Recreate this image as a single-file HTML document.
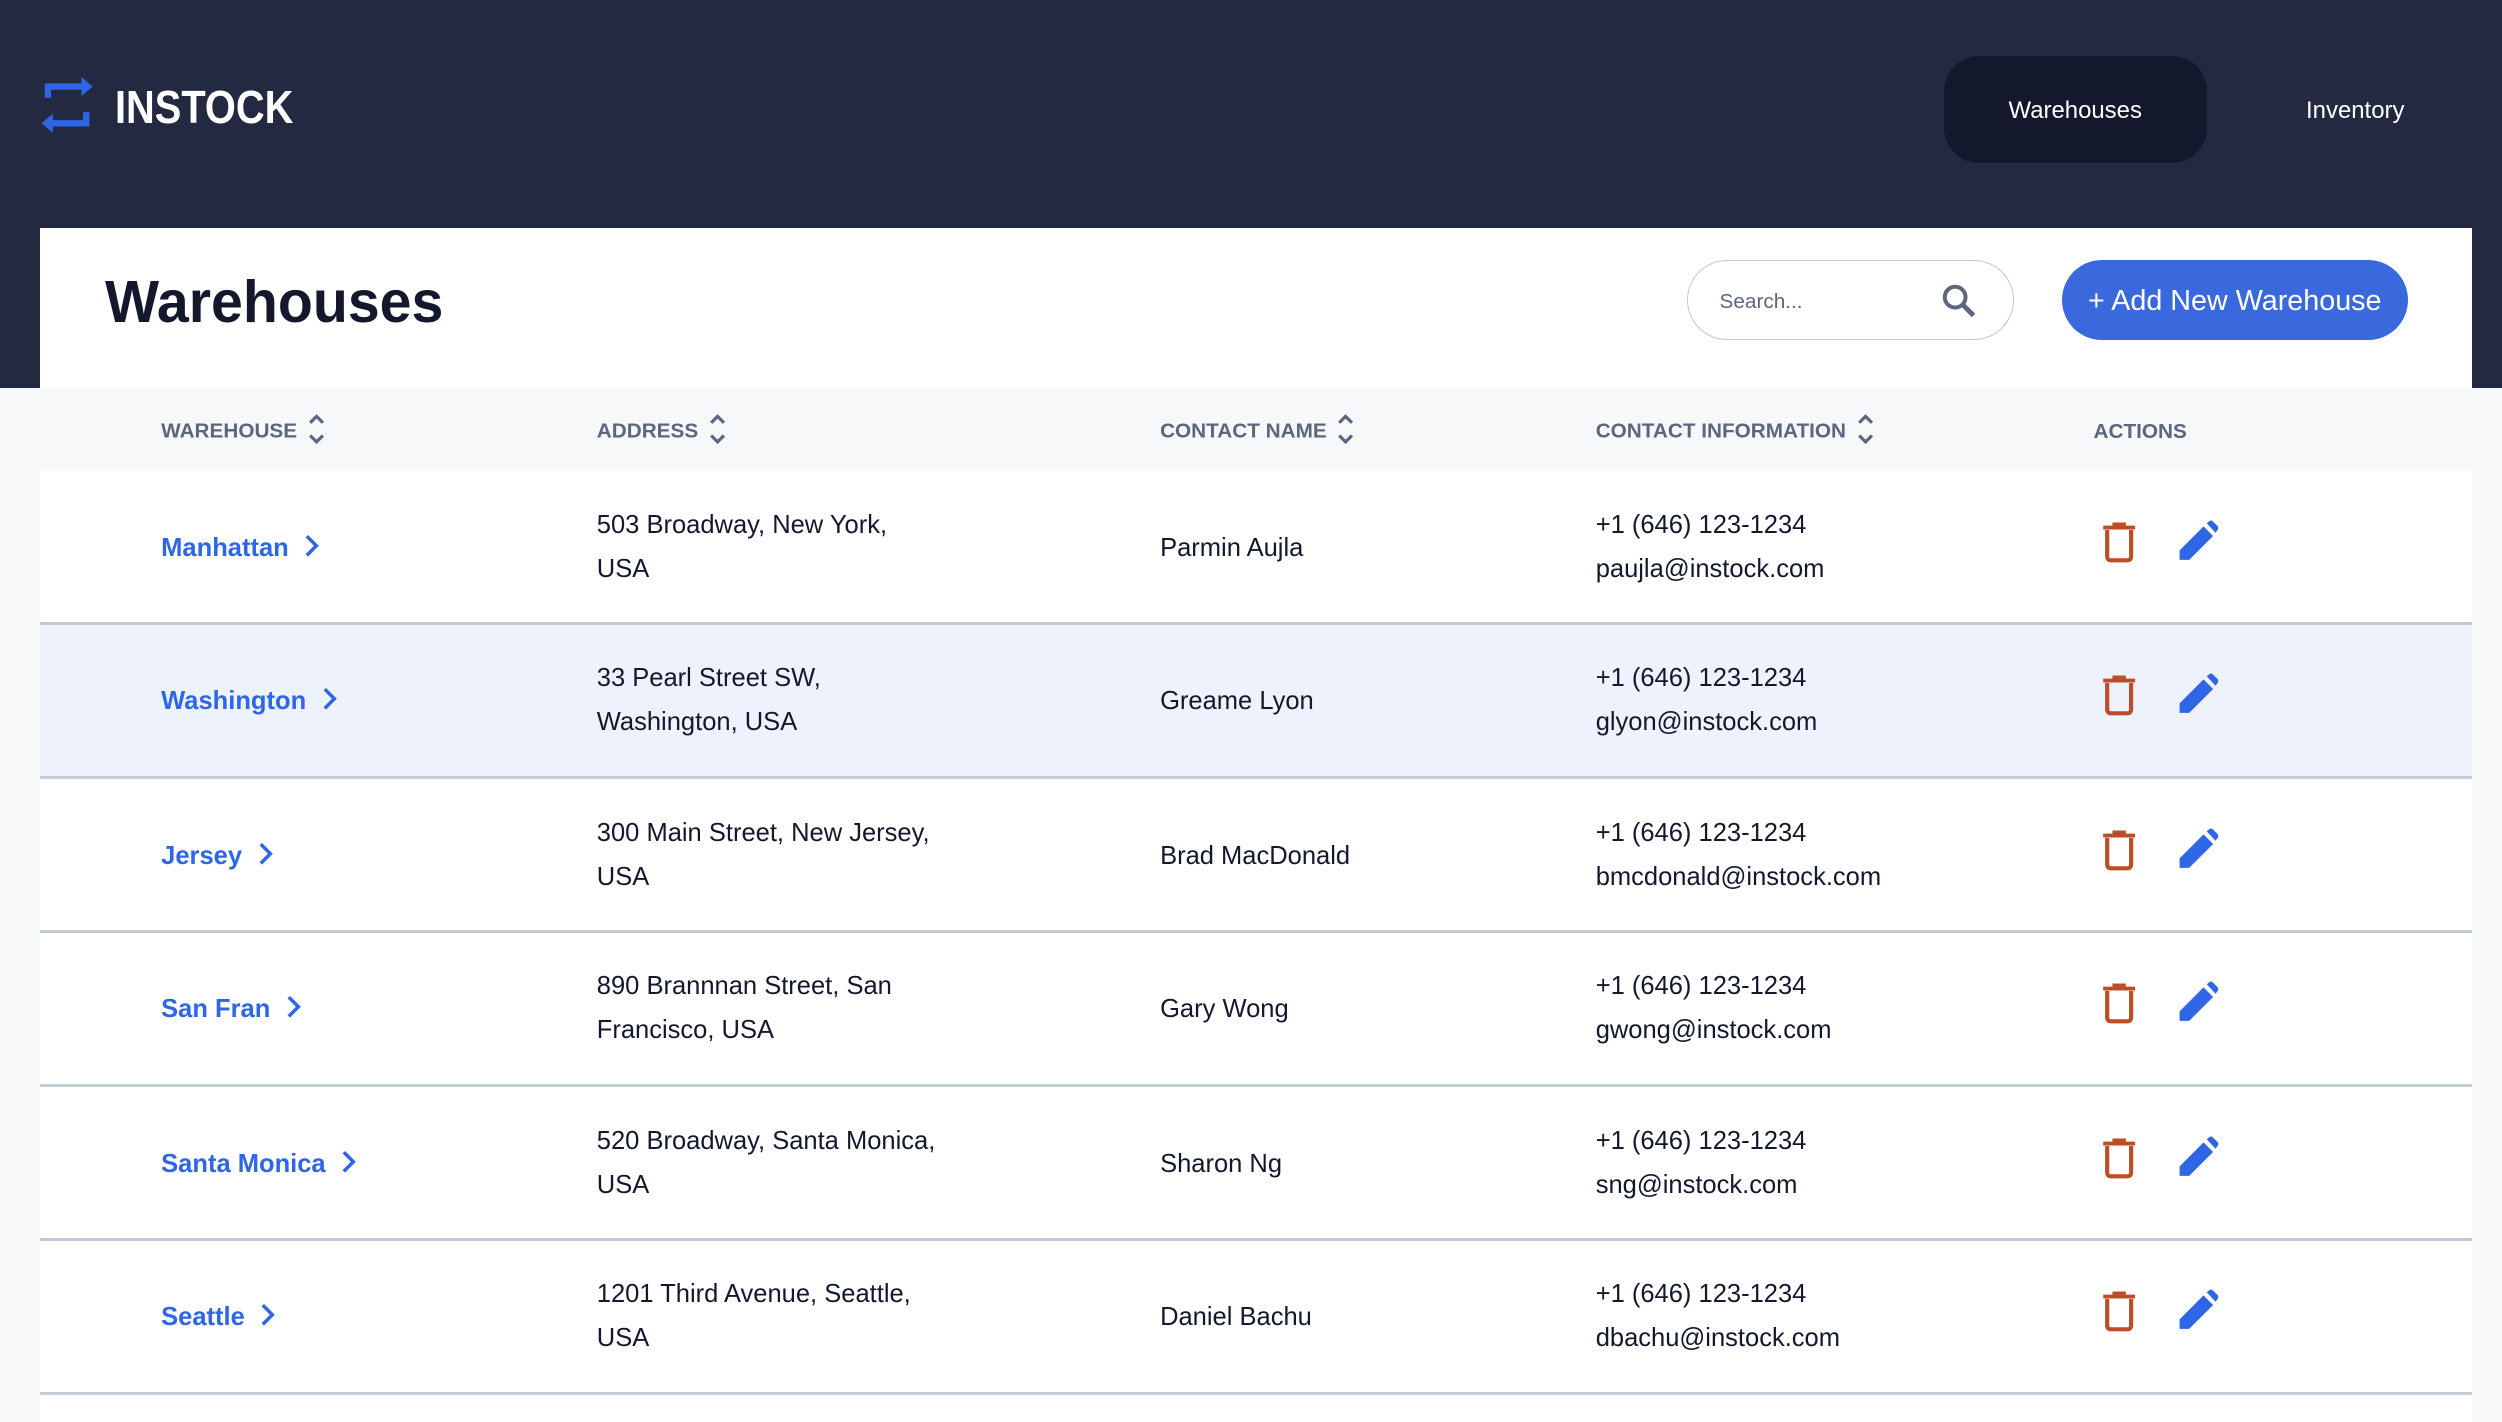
<!DOCTYPE html>
<html><head><meta charset="utf-8"><style>
*{margin:0;padding:0;box-sizing:border-box}
html,body{width:2502px;height:1422px;overflow:hidden;background:#f7f8f9}
#r{zoom:1.5957;width:1568px;height:891px;overflow:hidden;position:relative;font-family:"Liberation Sans",sans-serif;color:#13182c}
.hdr{position:absolute;left:0;top:0;width:1568px;height:243px;background:#232940}
.abs{position:absolute}
.logo{left:72px;top:50px;font-size:29px;font-weight:bold;color:#fff;transform:scaleX(0.86);transform-origin:left}
.pill{left:1218px;top:35px;width:165px;height:67px;background:#13182c;border-radius:22px;color:#fff;font-size:15px;text-align:center;line-height:69px}
.inv{left:1410px;top:35px;width:132px;height:67px;color:#fff;font-size:15px;text-align:center;line-height:69px}
.card{left:25px;top:143px;width:1524px;height:748px;background:#fff}
.title{left:66px;top:168px;font-size:37px;font-weight:bold;color:#13182c;transform:scaleX(0.97);transform-origin:left}
.search{left:1057px;top:163px;width:205px;height:50px;border:1px solid #c1c7d3;border-radius:25px;background:#fff}
.search span{position:absolute;left:20px;top:18px;font-size:13px;color:#5c667e}
.btn{left:1292px;top:163px;width:217px;height:50px;border-radius:25px;background:#3a69dd;color:#fff;font-size:18px;text-align:center;line-height:52px}
.th{left:25px;top:243px;width:1524px;height:52px;background:#f7f8f9}
.hl{position:absolute;top:261px;font-size:13px;font-weight:bold;color:#5c667e;white-space:nowrap}
.hl svg{vertical-align:middle;margin-left:6px;margin-top:-4px}
.row{position:absolute;left:25px;width:1524px;height:96.5px;border-bottom:2px solid #c5cbd6;background:#fff}
.row.h{background:#eef2fc}
.c{position:absolute;font-size:16px;line-height:27.5px;color:#13182c;white-space:nowrap}
.lk{color:#2e66e6;font-weight:bold}
</style></head><body><div id="r">
<div class="hdr"></div>
<svg class="abs" style="left:25px;top:48px" width="34" height="36" viewBox="0 0 34 36"><path d="M5 13V6H27" fill="none" stroke="#2e66e6" stroke-width="4"/><path d="M26 0L33 6L26 12Z" fill="#2e66e6"/><path d="M29 22V29H7" fill="none" stroke="#2e66e6" stroke-width="4"/><path d="M8 23L1 29L8 35Z" fill="#2e66e6"/></svg>
<div class="abs logo">INSTOCK</div>
<div class="abs pill">Warehouses</div>
<div class="abs inv">Inventory</div>
<div class="abs card"></div>
<div class="abs title">Warehouses</div>
<div class="abs search"><span>Search...</span><svg style="position:absolute;left:158px;top:13px" width="24" height="24" viewBox="0 0 24 24"><circle cx="9.5" cy="9.5" r="6.5" fill="none" stroke="#5c667e" stroke-width="2.5"/><path d="M14 14L21 21" stroke="#5c667e" stroke-width="3"/></svg></div>
<div class="abs btn">+ Add New Warehouse</div>
<div class="abs th"></div>
<div class="hl" style="left:101px">WAREHOUSE<svg width="12" height="24" viewBox="0 0 12 24"><path d="M2 8L6 4L10 8M2 16L6 20L10 16" fill="none" stroke="#5c667e" stroke-width="2"/></svg></div>
<div class="hl" style="left:374px">ADDRESS<svg width="12" height="24" viewBox="0 0 12 24"><path d="M2 8L6 4L10 8M2 16L6 20L10 16" fill="none" stroke="#5c667e" stroke-width="2"/></svg></div>
<div class="hl" style="left:727px">CONTACT NAME<svg width="12" height="24" viewBox="0 0 12 24"><path d="M2 8L6 4L10 8M2 16L6 20L10 16" fill="none" stroke="#5c667e" stroke-width="2"/></svg></div>
<div class="hl" style="left:1000px">CONTACT INFORMATION<svg width="12" height="24" viewBox="0 0 12 24"><path d="M2 8L6 4L10 8M2 16L6 20L10 16" fill="none" stroke="#5c667e" stroke-width="2"/></svg></div>
<div class="hl" style="left:1312px;top:263px">ACTIONS</div>

<div class="row" style="top:295px"></div>
<div class="row h" style="top:391.5px"></div>
<div class="row" style="top:488px"></div>
<div class="row" style="top:584.5px"></div>
<div class="row" style="top:681px"></div>
<div class="row" style="top:777.5px"></div>
<div class="row" style="top:874px"></div>

<div class="c lk" style="left:101px;top:330px">Manhattan <svg width="12" height="16" viewBox="0 0 12 16" style="margin-left:4px;vertical-align:-2px"><path d="M3 2L9 8L3 14" fill="none" stroke="#2e66e6" stroke-width="2.2"/></svg></div>
<div class="c" style="left:374px;top:316px">503 Broadway, New York,<br>USA</div>
<div class="c" style="left:727px;top:330px">Parmin Aujla</div>
<div class="c" style="left:1000px;top:316px">+1 (646) 123-1234<br>paujla@instock.com</div>

<div class="c lk" style="left:101px;top:426px">Washington <svg width="12" height="16" viewBox="0 0 12 16" style="margin-left:4px;vertical-align:-2px"><path d="M3 2L9 8L3 14" fill="none" stroke="#2e66e6" stroke-width="2.2"/></svg></div>
<div class="c" style="left:374px;top:412px">33 Pearl Street SW,<br>Washington, USA</div>
<div class="c" style="left:727px;top:426px">Greame Lyon</div>
<div class="c" style="left:1000px;top:412px">+1 (646) 123-1234<br>glyon@instock.com</div>

<div class="c lk" style="left:101px;top:523px">Jersey <svg width="12" height="16" viewBox="0 0 12 16" style="margin-left:4px;vertical-align:-2px"><path d="M3 2L9 8L3 14" fill="none" stroke="#2e66e6" stroke-width="2.2"/></svg></div>
<div class="c" style="left:374px;top:509px">300 Main Street, New Jersey,<br>USA</div>
<div class="c" style="left:727px;top:523px">Brad MacDonald</div>
<div class="c" style="left:1000px;top:509px">+1 (646) 123-1234<br>bmcdonald@instock.com</div>

<div class="c lk" style="left:101px;top:619px">San Fran <svg width="12" height="16" viewBox="0 0 12 16" style="margin-left:4px;vertical-align:-2px"><path d="M3 2L9 8L3 14" fill="none" stroke="#2e66e6" stroke-width="2.2"/></svg></div>
<div class="c" style="left:374px;top:605px">890 Brannnan Street, San<br>Francisco, USA</div>
<div class="c" style="left:727px;top:619px">Gary Wong</div>
<div class="c" style="left:1000px;top:605px">+1 (646) 123-1234<br>gwong@instock.com</div>

<div class="c lk" style="left:101px;top:716px">Santa Monica <svg width="12" height="16" viewBox="0 0 12 16" style="margin-left:4px;vertical-align:-2px"><path d="M3 2L9 8L3 14" fill="none" stroke="#2e66e6" stroke-width="2.2"/></svg></div>
<div class="c" style="left:374px;top:702px">520 Broadway, Santa Monica,<br>USA</div>
<div class="c" style="left:727px;top:716px">Sharon Ng</div>
<div class="c" style="left:1000px;top:702px">+1 (646) 123-1234<br>sng@instock.com</div>

<div class="c lk" style="left:101px;top:812px">Seattle <svg width="12" height="16" viewBox="0 0 12 16" style="margin-left:4px;vertical-align:-2px"><path d="M3 2L9 8L3 14" fill="none" stroke="#2e66e6" stroke-width="2.2"/></svg></div>
<div class="c" style="left:374px;top:798px">1201 Third Avenue, Seattle,<br>USA</div>
<div class="c" style="left:727px;top:812px">Daniel Bachu</div>
<div class="c" style="left:1000px;top:798px">+1 (646) 123-1234<br>dbachu@instock.com</div>

<svg class="abs" style="left:1316px;top:327px" width="24" height="26" viewBox="0 0 24 26"><path d="M2 3.5H22M9 3.5V1.5H15V3.5" fill="none" stroke="#bd4d26" stroke-width="2.4"/><path d="M4.5 5V21.5Q4.5 24 7 24H17Q19.5 24 19.5 21.5V5" fill="none" stroke="#bd4d26" stroke-width="2.6"/></svg>
<svg class="abs" style="left:1365px;top:326px" width="26" height="26" viewBox="0 0 26 26"><path d="M1 25V19L16 4L22 10L7 25Z" fill="#2e66e6"/><path d="M18 2L20 0.5Q21 0 22 1L25 4Q25.5 5 25 6L23.5 8Z" fill="#2e66e6"/></svg>

<svg class="abs" style="left:1316px;top:423px" width="24" height="26" viewBox="0 0 24 26"><path d="M2 3.5H22M9 3.5V1.5H15V3.5" fill="none" stroke="#bd4d26" stroke-width="2.4"/><path d="M4.5 5V21.5Q4.5 24 7 24H17Q19.5 24 19.5 21.5V5" fill="none" stroke="#bd4d26" stroke-width="2.6"/></svg>
<svg class="abs" style="left:1365px;top:422px" width="26" height="26" viewBox="0 0 26 26"><path d="M1 25V19L16 4L22 10L7 25Z" fill="#2e66e6"/><path d="M18 2L20 0.5Q21 0 22 1L25 4Q25.5 5 25 6L23.5 8Z" fill="#2e66e6"/></svg>

<svg class="abs" style="left:1316px;top:520px" width="24" height="26" viewBox="0 0 24 26"><path d="M2 3.5H22M9 3.5V1.5H15V3.5" fill="none" stroke="#bd4d26" stroke-width="2.4"/><path d="M4.5 5V21.5Q4.5 24 7 24H17Q19.5 24 19.5 21.5V5" fill="none" stroke="#bd4d26" stroke-width="2.6"/></svg>
<svg class="abs" style="left:1365px;top:519px" width="26" height="26" viewBox="0 0 26 26"><path d="M1 25V19L16 4L22 10L7 25Z" fill="#2e66e6"/><path d="M18 2L20 0.5Q21 0 22 1L25 4Q25.5 5 25 6L23.5 8Z" fill="#2e66e6"/></svg>

<svg class="abs" style="left:1316px;top:616px" width="24" height="26" viewBox="0 0 24 26"><path d="M2 3.5H22M9 3.5V1.5H15V3.5" fill="none" stroke="#bd4d26" stroke-width="2.4"/><path d="M4.5 5V21.5Q4.5 24 7 24H17Q19.5 24 19.5 21.5V5" fill="none" stroke="#bd4d26" stroke-width="2.6"/></svg>
<svg class="abs" style="left:1365px;top:615px" width="26" height="26" viewBox="0 0 26 26"><path d="M1 25V19L16 4L22 10L7 25Z" fill="#2e66e6"/><path d="M18 2L20 0.5Q21 0 22 1L25 4Q25.5 5 25 6L23.5 8Z" fill="#2e66e6"/></svg>

<svg class="abs" style="left:1316px;top:713px" width="24" height="26" viewBox="0 0 24 26"><path d="M2 3.5H22M9 3.5V1.5H15V3.5" fill="none" stroke="#bd4d26" stroke-width="2.4"/><path d="M4.5 5V21.5Q4.5 24 7 24H17Q19.5 24 19.5 21.5V5" fill="none" stroke="#bd4d26" stroke-width="2.6"/></svg>
<svg class="abs" style="left:1365px;top:712px" width="26" height="26" viewBox="0 0 26 26"><path d="M1 25V19L16 4L22 10L7 25Z" fill="#2e66e6"/><path d="M18 2L20 0.5Q21 0 22 1L25 4Q25.5 5 25 6L23.5 8Z" fill="#2e66e6"/></svg>

<svg class="abs" style="left:1316px;top:809px" width="24" height="26" viewBox="0 0 24 26"><path d="M2 3.5H22M9 3.5V1.5H15V3.5" fill="none" stroke="#bd4d26" stroke-width="2.4"/><path d="M4.5 5V21.5Q4.5 24 7 24H17Q19.5 24 19.5 21.5V5" fill="none" stroke="#bd4d26" stroke-width="2.6"/></svg>
<svg class="abs" style="left:1365px;top:808px" width="26" height="26" viewBox="0 0 26 26"><path d="M1 25V19L16 4L22 10L7 25Z" fill="#2e66e6"/><path d="M18 2L20 0.5Q21 0 22 1L25 4Q25.5 5 25 6L23.5 8Z" fill="#2e66e6"/></svg>
</div></body></html>
